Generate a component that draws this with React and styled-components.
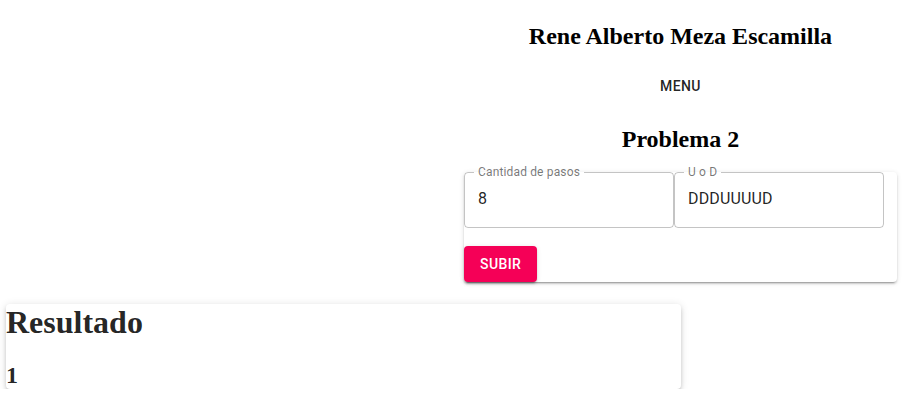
import React, { useState } from "react";
import styled, { createGlobalStyle } from "styled-components";

const GlobalStyle = createGlobalStyle`
  body {
    margin: 0;
    background: #ffffff;
    font-family: "Liberation Serif", "Times New Roman", serif;
  }
`;

const paperShadow =
  "0px 3px 1px -2px rgba(0,0,0,0.2), 0px 2px 2px 0px rgba(0,0,0,0.14), 0px 1px 5px 0px rgba(0,0,0,0.12)";

const Page = styled.div`
  display: flex;
  flex-direction: column;
  width: 916px;
`;

const TopGrid = styled.div`
  display: grid;
  grid-template-columns: 1fr 433px;
  padding-right: 19px;
`;

const Column = styled.div`
  grid-column: 2;
  display: flex;
  flex-direction: column;
  align-items: center;
`;

const Title = styled.h2`
  font-family: "Liberation Serif", "Times New Roman", serif;
  font-size: 24px;
  font-weight: bold;
  color: #000;
  margin: ${(p) => p.$margin};
  text-align: center;
`;

const MenuButton = styled.button`
  height: 36px;
  padding: 6px 8px;
  border: none;
  background: transparent;
  font-family: Roboto, "Liberation Sans", sans-serif;
  font-size: 14px;
  font-weight: 500;
  letter-spacing: 0.02857em;
  line-height: 1.75;
  text-transform: uppercase;
  color: rgba(0, 0, 0, 0.87);
  border-radius: 4px;
  cursor: pointer;
`;

const FormCard = styled.form`
  align-self: stretch;
  background: #fff;
  border-radius: 4px;
  box-shadow: ${paperShadow};
  display: flex;
  flex-direction: column;
  align-items: flex-start;
`;

const FieldRow = styled.div`
  display: flex;
  margin-top: -6px;
`;

const Field = styled.fieldset`
  box-sizing: border-box;
  width: 210px;
  margin: 0;
  padding: 0;
  min-width: 0;
  border: 1px solid rgba(0, 0, 0, 0.23);
  border-radius: 4px;
`;

const Legend = styled.legend`
  margin-left: 9px;
  padding: 0 4px;
  font-family: Roboto, "Liberation Sans", sans-serif;
  font-size: 12px;
  line-height: 12px;
  letter-spacing: 0.15px;
  color: rgba(0, 0, 0, 0.54);
`;

const Input = styled.input`
  box-sizing: border-box;
  display: block;
  width: 100%;
  height: 49px;
  border: none;
  outline: none;
  background: transparent;
  padding: 10px 14px 19px 13px;
  font-family: Roboto, "Liberation Sans", sans-serif;
  font-size: 16px;
  line-height: 19px;
  letter-spacing: 0.15px;
  color: rgba(0, 0, 0, 0.87);
`;

const SubmitButton = styled.button`
  margin-top: 18px;
  height: 36px;
  padding: 6px 16px;
  border: none;
  border-radius: 4px;
  background: #f50057;
  color: #fff;
  font-family: Roboto, "Liberation Sans", sans-serif;
  font-size: 14px;
  font-weight: 500;
  letter-spacing: 0.02857em;
  line-height: 1.75;
  text-transform: uppercase;
  box-shadow: ${paperShadow};
  cursor: pointer;
`;

const ResultCard = styled.div`
  width: 675px;
  margin: 22px 0 0 6px;
  background: #fff;
  border-radius: 4px;
  box-shadow: 0px 3px 3px -2px rgba(0,0,0,0.2), 0px 3px 4px 0px rgba(0,0,0,0.14), 0px 1px 8px 0px rgba(0,0,0,0.12);
  color: rgba(0, 0, 0, 0.87);
`;

const ResultTitle = styled.h1`
  font-family: "Liberation Serif", "Times New Roman", serif;
  font-size: 32px;
  font-weight: bold;
  margin: 0 0 21px;
`;

const ResultValue = styled.h2`
  font-family: "Liberation Serif", "Times New Roman", serif;
  font-size: 24px;
  font-weight: bold;
  margin: 0;
`;

export default function App() {
  const [pasos, setPasos] = useState("8");
  const [camino, setCamino] = useState("DDDUUUUD");

  return (
    <>
      <GlobalStyle />
      <Page>
        <TopGrid>
          <Column>
            <Title $margin="23px 0 18px">Rene Alberto Meza Escamilla</Title>
            <MenuButton type="button">Menu</MenuButton>
            <Title $margin="22px 0 19px">Problema 2</Title>
            <FormCard onSubmit={(e) => e.preventDefault()}>
              <FieldRow>
                <Field>
                  <Legend>Cantidad de pasos</Legend>
                  <Input value={pasos} onChange={(e) => setPasos(e.target.value)} />
                </Field>
                <Field>
                  <Legend>U o D</Legend>
                  <Input value={camino} onChange={(e) => setCamino(e.target.value)} />
                </Field>
              </FieldRow>
              <SubmitButton type="submit">Subir</SubmitButton>
            </FormCard>
          </Column>
        </TopGrid>
        <ResultCard>
          <ResultTitle>Resultado</ResultTitle>
          <ResultValue>1</ResultValue>
        </ResultCard>
      </Page>
    </>
  );
}
